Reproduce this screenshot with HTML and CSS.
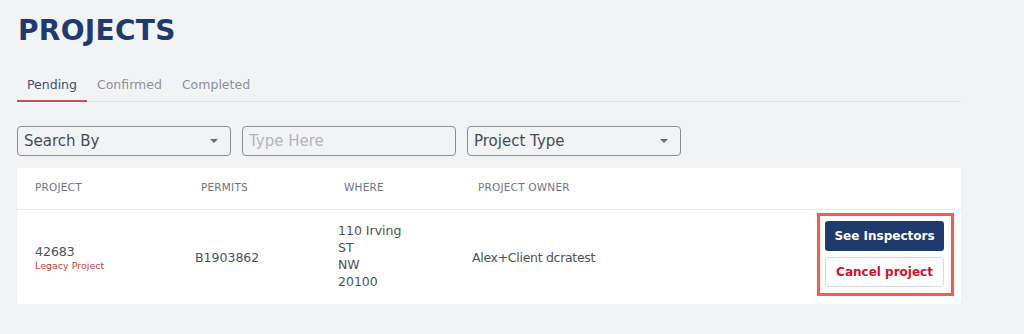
FILE: index.html
```html
<!DOCTYPE html>
<html>
<head>
<meta charset="utf-8">
<link rel="stylesheet" href="styles.css">
</head>
<body>
<main class="page">
  <h1 class="title">PROJECTS</h1>
  <nav class="tabs">
    <span class="tab active">Pending</span>
    <span class="tab">Confirmed</span>
    <span class="tab">Completed</span>
  </nav>
  <div class="filters">
    <div class="field select"><span>Search By</span><i class="caret"></i></div>
    <div class="field input"><span class="ph">Type Here</span></div>
    <div class="field select"><span>Project Type</span><i class="caret"></i></div>
  </div>
  <section class="card">
    <div class="row head">
      <div class="c1">PROJECT</div>
      <div class="c2">PERMITS</div>
      <div class="c3">WHERE</div>
      <div class="c4">PROJECT OWNER</div>
      <div class="c5"></div>
    </div>
    <div class="row body">
      <div class="c1"><div>42683</div><div class="legacy">Legacy Project</div></div>
      <div class="c2">B1903862</div>
      <div class="c3">110 Irving<br>ST<br>NW<br>20100</div>
      <div class="c4">Alex+Client dcratest</div>
      <div class="c5">
        <div class="highlight">
          <button class="btn primary">See Inspectors</button>
          <button class="btn danger">Cancel project</button>
        </div>
      </div>
    </div>
  </section>
</main>
</body>
</html>
```
FILE: styles.css
```css
* { box-sizing: border-box; }
html, body { margin: 0; }
body {
  background: #f2f3f5;
  font-family: "DejaVu Sans", sans-serif;
  color: #4a4f5c;
}
.page {
  width: 944px;
  margin-left: 17px;
  padding-top: 14px;
}
.title {
  margin: 0 0 0 1px;
  font-size: 28px;
  line-height: 34px;
  font-weight: 800;
  color: #1f3a6e;
  letter-spacing: 0.3px;
}
.tabs {
  display: flex;
  margin-top: 23px;
  border-bottom: 1px solid #e0e1e5;
}
.tab {
  padding: 0 10px 1px;
  font-size: 12.5px;
  line-height: 28px;
  color: #8d9099;
  border-bottom: 2px solid transparent;
  margin-bottom: -1px;
}
.tab.active {
  color: #3e4c6e;
  border-bottom-color: #c9515f;
}
.filters {
  display: flex;
  gap: 11px;
  margin-top: 24px;
}
.field {
  width: 214px;
  height: 30px;
  border: 1px solid #8b8e95;
  border-radius: 4px;
  display: flex;
  align-items: center;
  justify-content: space-between;
  padding: 0 12px 0 6px;
  font-size: 15px;
  color: #474b55;
  background: #f2f3f5;
}
.field .ph { color: #b3b5ba; }
.caret {
  width: 0; height: 0;
  border-left: 4px solid transparent;
  border-right: 4px solid transparent;
  border-top: 4px solid #6a6d74;
}
.card {
  margin-top: 12px;
  background: #fff;
  border-radius: 3px;
  box-shadow: 0 1px 2px rgba(0,0,0,0.05);
}
.row {
  display: grid;
  grid-template-columns: 178px 143px 134px 1fr auto;
  align-items: center;
}
.row.head {
  height: 42px;
  padding-bottom: 4px;
  border-bottom: 1px solid #e8e9ec;
  font-size: 10.5px;
  color: #6f7485;
  letter-spacing: 0.2px;
}
.row.head > div { padding-left: 6px; }
.row.head > .c1 { padding-left: 18px; }
.row.body {
  height: 94px;
  font-size: 12.5px;
  color: #4d515c;
}
.row.body > .c1 { padding-left: 18px; }
.row.body > .c3 { line-height: 17px; margin-top: -2px; }
.row.body > .c4 { letter-spacing: -0.3px; }
.legacy {
  font-size: 9.5px;
  color: #c8443a;
  margin-top: 1px;
}
.c5 { padding-right: 7px; }
.highlight {
  border: 3px solid #fa584b;
  padding: 5px 7px 6px 5px;
  display: flex;
  flex-direction: column;
  gap: 6px;
  margin-top: -6px;
}
.btn {
  width: 119px;
  height: 30px;
  border-radius: 3px;
  font-family: "DejaVu Sans", sans-serif;
  font-weight: bold;
  font-size: 12px;
  cursor: pointer;
}
.btn.primary {
  background: #1f3a6c;
  color: #fff;
  border: none;
}
.btn.danger {
  background: #fff;
  color: #d0112b;
  border: 1px solid #d8dade;
}
```
